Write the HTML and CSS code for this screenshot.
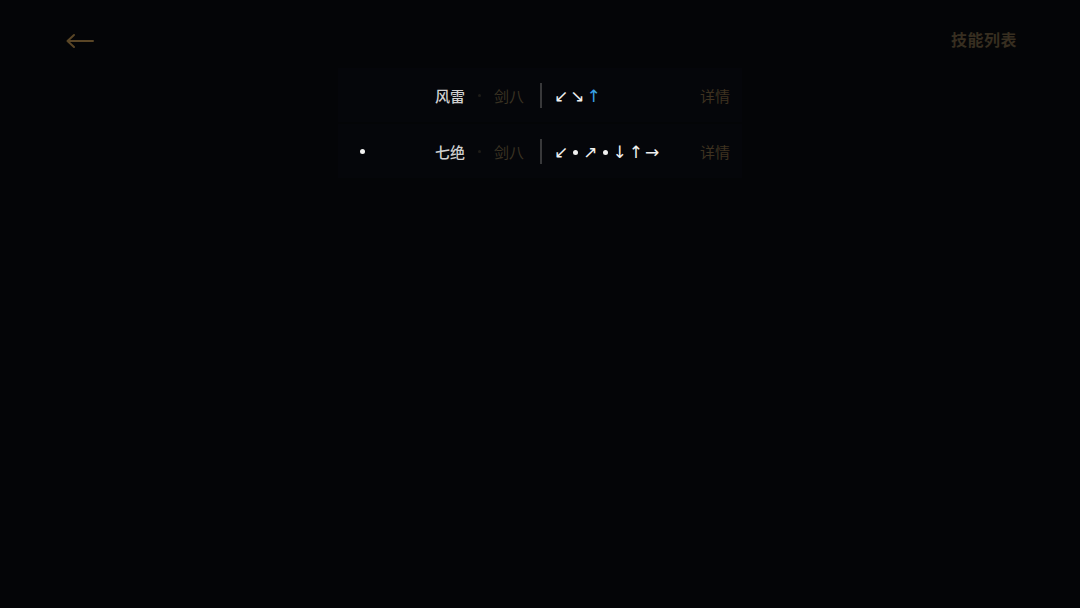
FILE: index.html
```html
<!DOCTYPE html>
<html lang="zh">
<head>
<meta charset="utf-8">
<link rel="stylesheet" href="styles.css">
</head>
<body>
<div class="page">
  <header class="topbar">
    <span class="back">
      <svg width="28" height="16" viewBox="0 0 28 16"><path d="M1.5 8 H27 M8 2 L1.5 8 L8 14" fill="none" stroke="#5a4626" stroke-width="2" stroke-linecap="round" stroke-linejoin="round"/></svg>
    </span>
    <span class="title">技能列表</span>
  </header>
  <main class="list">
    <div class="row">
      <div class="left">
        <span class="name">风雷</span>
        <span class="sep-dot"></span>
        <span class="sub">剑八</span>
      </div>
      <div class="divider"></div>
      <div class="combo">
        <span class="k">↙</span><span class="k">↘</span><span class="k blue">↑</span>
      </div>
      <span class="detail">详情</span>
    </div>
    <div class="row">
      <div class="left">
        <span class="marker"></span>
        <span class="name">七绝</span>
        <span class="sep-dot"></span>
        <span class="sub">剑八</span>
      </div>
      <div class="divider"></div>
      <div class="combo">
        <span class="k">↙</span><span class="b"></span><span class="k">↗</span><span class="b"></span><span class="k">↓</span><span class="k">↑</span><span class="k">→</span>
      </div>
      <span class="detail">详情</span>
    </div>
  </main>
</div>
</body>
</html>
```

FILE: styles.css
```css
html, body {
  margin: 0;
  padding: 0;
  background: #040507;
}
body {
  width: 1080px;
  height: 608px;
  overflow: hidden;
  font-family: "Noto Sans CJK SC", "Noto Sans", sans-serif;
}
.page {
  display: flex;
  flex-direction: column;
}
.topbar {
  display: flex;
  justify-content: space-between;
  align-items: center;
  box-sizing: border-box;
  height: 68px;
  padding: 14px 63px 0 66px;
}
.back {
  display: flex;
  width: 28px;
  height: 16px;
}
.title {
  font-size: 16px;
  font-weight: 700;
  color: #372e20;
  letter-spacing: 0.5px;
  padding-bottom: 4px;
}
.list {
  width: 404px;
  margin: 0 auto;
  display: flex;
  flex-direction: column;
  gap: 2px;
}
.row {
  display: flex;
  align-items: center;
  height: 54px;
  background: #05060a;
}
.left {
  display: flex;
  align-items: center;
  justify-content: flex-end;
  width: 202px;
  padding: 0 16px 0 22px;
  box-sizing: border-box;
}
.marker {
  width: 5px;
  height: 5px;
  border-radius: 50%;
  background: #f2f2f2;
  margin-right: auto;
}
.name {
  font-size: 15px;
  font-weight: 500;
  color: #d0d0d0;
}
.sep-dot {
  width: 3px;
  height: 3px;
  border-radius: 50%;
  background: #1e1c18;
  margin: 0 13px;
}
.sub {
  font-size: 15px;
  color: #3a3222;
}
.divider {
  width: 2px;
  height: 25px;
  background: #38383a;
}
.combo {
  display: flex;
  align-items: center;
  gap: 2px;
  padding: 3px 0 0 12px;
  font-family: "DejaVu Sans", sans-serif;
  font-size: 17px;
  color: #f0f0f0;
}
.k {
  line-height: 1;
}
.blue {
  color: #3aa3e6;
}
.b {
  width: 5px;
  height: 5px;
  border-radius: 50%;
  background: #f0f0f0;
  margin: 0 3px;
}
.detail {
  margin-left: auto;
  padding-right: 12px;
  font-size: 15px;
  color: #3e3220;
}
```
